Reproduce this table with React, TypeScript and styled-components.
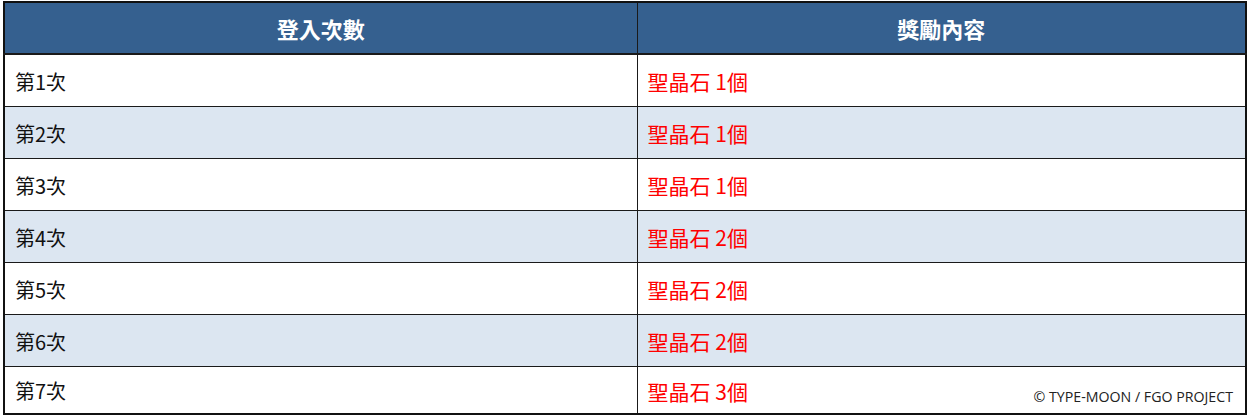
import styled, { createGlobalStyle } from "styled-components";

const GlobalStyle = createGlobalStyle`
  html, body {
    margin: 0;
    padding: 0;
    background: #ffffff;
  }
`;

const PageWrapper = styled.div`
  position: relative;
  width: 1250px;
  height: 419px;
  padding: 1px 0 0 3px;
  box-sizing: border-box;
  background: #ffffff;
`;

const Table = styled.table`
  width: 1244px;
  border-collapse: collapse;
  border: 2px solid #111111;
  table-layout: fixed;
  font-family: "Noto Sans CJK TC", "Noto Sans", sans-serif;
`;

const HeadCell = styled.th`
  height: 50px;
  padding: 0;
  background: #35608f;
  color: #ffffff;
  font-size: 22px;
  font-weight: 700;
  text-align: center;
  border: 1px solid #1a1a1a;
  border-bottom-width: 2px;
`;

const Row = styled.tr<{ $alt: boolean; $last?: boolean }>`
  height: ${(p) => (p.$last ? "48px" : "52px")};
  background: ${(p) => (p.$alt ? "#dce6f1" : "#ffffff")};
`;

const Cell = styled.td<{ $red?: boolean }>`
  padding: 3px 0 0 10px;
  border: 1px solid #1a1a1a;
  font-size: ${(p) => (p.$red ? "21px" : "20px")};
  line-height: 1.2;
  color: ${(p) => (p.$red ? "#ff0000" : "#111111")};
  text-align: left;
  vertical-align: middle;
`;

const Copyright = styled.div`
  position: absolute;
  right: 17px;
  bottom: 13px;
  font-family: "Open Sans", "Noto Sans", sans-serif;
  font-size: 14.2px;
  color: #222222;
`;

const rewards = [1, 1, 1, 2, 2, 2, 3];

export default function App() {
  return (
    <>
      <GlobalStyle />
      <PageWrapper>
        <Table>
          <colgroup>
            <col style={{ width: "633px" }} />
            <col />
          </colgroup>
          <thead>
            <tr>
              <HeadCell>登入次數</HeadCell>
              <HeadCell>獎勵內容</HeadCell>
            </tr>
          </thead>
          <tbody>
            {rewards.map((n, i) => (
              <Row key={i} $alt={i % 2 === 1} $last={i === rewards.length - 1}>
                <Cell>第{i + 1}次</Cell>
                <Cell $red>聖晶石 {n}個</Cell>
              </Row>
            ))}
          </tbody>
        </Table>
        <Copyright>© TYPE-MOON / FGO PROJECT</Copyright>
      </PageWrapper>
    </>
  );
}
